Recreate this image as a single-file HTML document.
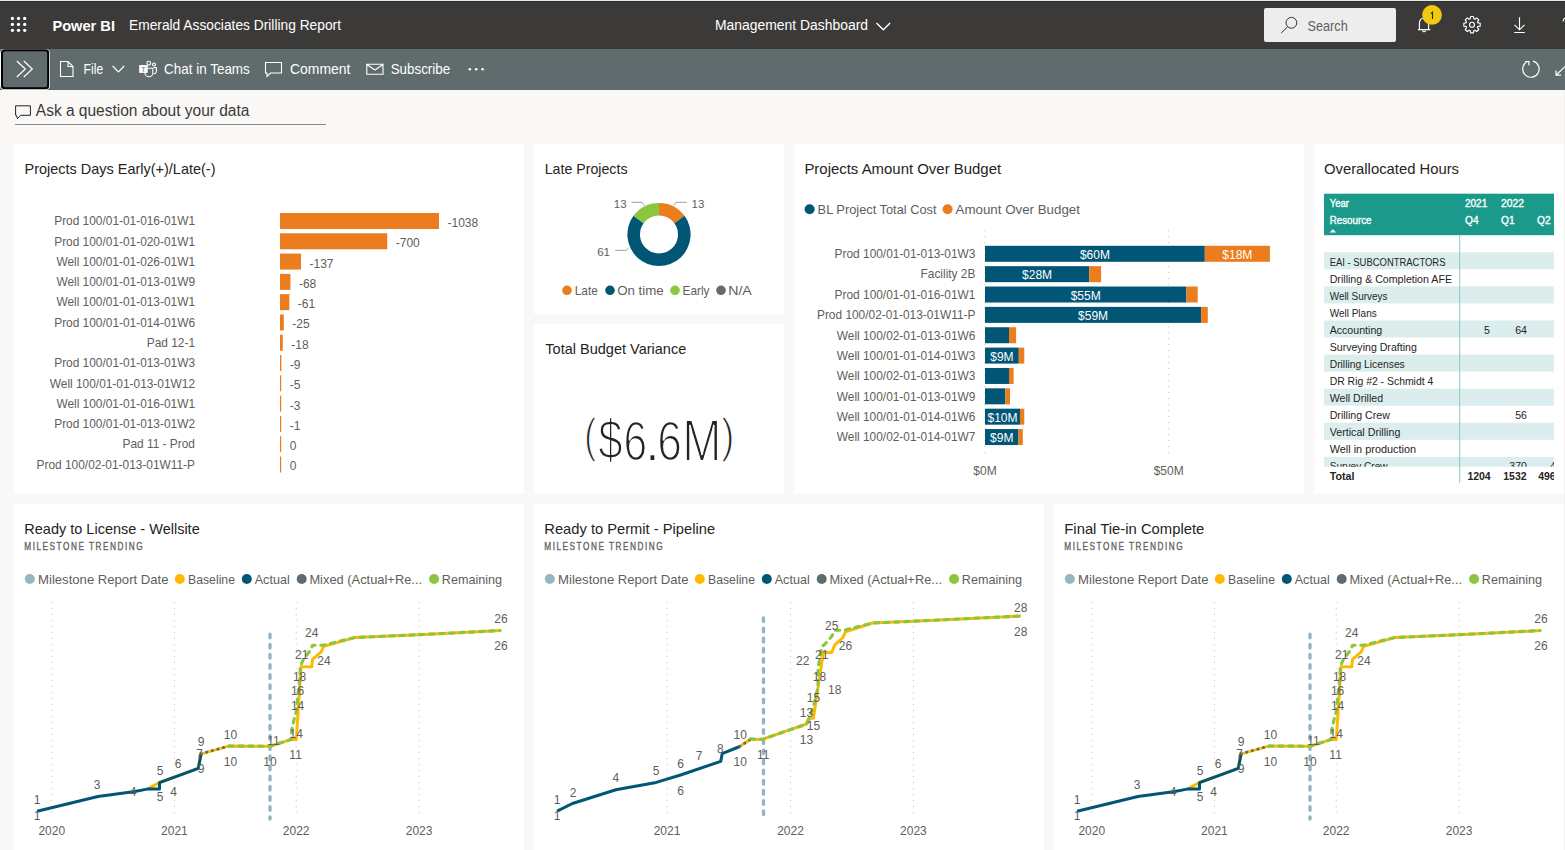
<!DOCTYPE html>
<html><head><meta charset="utf-8"><title>Power BI - Management Dashboard</title>
<style>
html,body{margin:0;padding:0;background:#f9f8f7;}
body{width:1565px;height:850px;overflow:hidden;position:relative;font-family:'Liberation Sans', sans-serif;}
svg text{font-family:'Liberation Sans', sans-serif;}
</style></head>
<body>
<svg width="1565" height="850" viewBox="0 0 1565 850" style="display:block;position:absolute;left:0;top:0">
<rect x="0" y="0" width="1565" height="1" fill="#e4e6e9"/>
<rect x="0" y="1" width="1565" height="48" fill="#3b3a39"/>
<rect x="0" y="1" width="1565" height="1" fill="#302f2e"/>
<circle cx="12.4" cy="18.4" r="1.65" fill="#fff"/>
<circle cx="12.4" cy="24.4" r="1.65" fill="#fff"/>
<circle cx="12.4" cy="30.3" r="1.65" fill="#fff"/>
<circle cx="18.5" cy="18.4" r="1.65" fill="#fff"/>
<circle cx="18.5" cy="24.4" r="1.65" fill="#fff"/>
<circle cx="18.5" cy="30.3" r="1.65" fill="#fff"/>
<circle cx="24.7" cy="18.4" r="1.65" fill="#fff"/>
<circle cx="24.7" cy="24.4" r="1.65" fill="#fff"/>
<circle cx="24.7" cy="30.3" r="1.65" fill="#fff"/>
<text x="52.4" y="30.5" font-size="14.6" fill="#fff" textLength="62.6" lengthAdjust="spacingAndGlyphs" font-weight="bold">Power BI</text>
<text x="129" y="30.1" font-size="14" fill="#fff" textLength="212" lengthAdjust="spacingAndGlyphs">Emerald Associates Drilling Report</text>
<text x="715" y="30.1" font-size="14" fill="#fff" textLength="153" lengthAdjust="spacingAndGlyphs">Management Dashboard</text>
<polyline points="876.5,23 883.3,29.8 890.1,23" fill="none" stroke="#fff" stroke-width="1.4"/>
<rect x="1264" y="8" width="132" height="34" rx="2" fill="#ededed"/>
<circle cx="1291.4" cy="22.8" r="5.4" fill="none" stroke="#323130" stroke-width="1"/>
<line x1="1287.6" y1="26.8" x2="1281.2" y2="33" stroke="#323130" stroke-width="1"/>
<text x="1307.5" y="31.1" font-size="14" fill="#605e5c" textLength="40.2" lengthAdjust="spacingAndGlyphs">Search</text>
<path d="M1417.9,29.6 L1430.3,29.6 M1419.4,29.4 L1419.4,23 A4.6,5 0 0 1 1428.6,23 L1428.6,29.4 M1422.7,30.4 A1.35,1.35 0 0 0 1425.4,30.4" fill="none" stroke="#fff" stroke-width="1.15"/>
<circle cx="1432" cy="14.9" r="9.9" fill="#f2c811"/>
<path d="M1430.9,13.6 L1432.5,12.2 L1432.5,19" fill="none" stroke="#252423" stroke-width="1.1"/>
<polygon points="1470.17,18.78 1470.60,16.52 1473.40,16.52 1473.83,18.78 1474.37,18.97 1474.89,19.22 1476.79,17.92 1478.78,19.91 1477.48,21.81 1477.73,22.33 1477.92,22.87 1480.18,23.30 1480.18,26.10 1477.92,26.53 1477.73,27.07 1477.48,27.59 1478.78,29.49 1476.79,31.48 1474.89,30.18 1474.37,30.43 1473.83,30.62 1473.40,32.88 1470.60,32.88 1470.17,30.62 1469.63,30.43 1469.11,30.18 1467.21,31.48 1465.22,29.49 1466.52,27.59 1466.27,27.07 1466.08,26.53 1463.82,26.10 1463.82,23.30 1466.08,22.87 1466.27,22.33 1466.52,21.81 1465.22,19.91 1467.21,17.92 1469.11,19.22 1469.63,18.97" fill="none" stroke="#fff" stroke-width="1.15" stroke-linejoin="round"/>
<circle cx="1472" cy="24.7" r="2.5" fill="none" stroke="#fff" stroke-width="1.15"/>
<path d="M1519.5,17.2 L1519.5,30 M1514.5,24.8 L1519.5,29.8 L1524.5,24.8 M1514.3,32.5 L1524.8,32.5" fill="none" stroke="#fff" stroke-width="1.15"/>
<path d="M1563.2,21.5 A3.8,3.8 0 0 1 1569,18" fill="none" stroke="#fff" stroke-width="1.2"/>
<rect x="0" y="49" width="1565" height="41" fill="#606b6d"/>
<rect x="0.5" y="49.5" width="49" height="40" rx="3.5" fill="none" stroke="#fff" stroke-width="1"/>
<rect x="2" y="50.2" width="46.2" height="38" rx="3" fill="#606b6d" stroke="#000" stroke-width="2"/>
<polyline points="16.8,61 25.3,69 16.8,77" fill="none" stroke="#fff" stroke-width="1.2"/>
<polyline points="23.8,61 32.3,69 23.8,77" fill="none" stroke="#fff" stroke-width="1.2"/>
<path d="M60.5,61.5 L68,61.5 L73,66.5 L73,76.5 L60.5,76.5 Z M68,61.5 L68,66.5 L73,66.5" fill="none" stroke="#fff" stroke-width="1.1"/>
<text x="83.6" y="74.3" font-size="14.4" fill="#fff" textLength="19.6" lengthAdjust="spacingAndGlyphs">File</text>
<polyline points="112.6,66 118.4,71.8 124.2,66" fill="none" stroke="#fff" stroke-width="1.2"/>
<g fill="none" stroke="#fff" stroke-width="1.1"><circle cx="148.8" cy="63.2" r="1.9"/><circle cx="154" cy="64.5" r="1.5"/><path d="M145,68.2 L152.8,68.2 L152.8,73 A3.9,3.8 0 0 1 145,73 Z"/><path d="M153.6,67.6 L156.4,67.6 L156.4,71.5 A2.3,2.3 0 0 1 153.8,73.6"/></g>
<rect x="139.2" y="65.1" width="8.5" height="7.8" fill="#fff"/>
<text x="143.4" y="71.6" font-size="6.5" fill="#8a9293" text-anchor="middle" font-weight="bold">T</text>
<text x="164.1" y="74.2" font-size="14.4" fill="#fff" textLength="85.7" lengthAdjust="spacingAndGlyphs">Chat in Teams</text>
<path d="M265.5,62.5 L281.5,62.5 L281.5,73 L270.5,73 L267,76.5 L267,73 L265.5,73 Z" fill="none" stroke="#fff" stroke-width="1.1"/>
<text x="290" y="74.2" font-size="14.4" fill="#fff" textLength="60.5" lengthAdjust="spacingAndGlyphs">Comment</text>
<path d="M366.8,64.3 L383,64.3 L383,74.3 L366.8,74.3 Z M366.8,64.5 L374.9,70 L383,64.5" fill="none" stroke="#fff" stroke-width="1.1"/>
<text x="390.7" y="74.2" font-size="14.4" fill="#fff" textLength="59.5" lengthAdjust="spacingAndGlyphs">Subscribe</text>
<circle cx="469.8" cy="69.3" r="1.25" fill="#fff"/>
<circle cx="476.2" cy="69.3" r="1.25" fill="#fff"/>
<circle cx="482.6" cy="69.3" r="1.25" fill="#fff"/>
<path d="M1533.0,61.1 A8.2,8.2 0 1 1 1526.2,62.3" fill="none" stroke="#fff" stroke-width="1.2"/><path d="M1525.2,61.6 L1528.9,61.6 L1528.9,65.2" fill="none" stroke="#fff" stroke-width="1.2"/>
<path d="M1556,75.2 L1566,65.5 M1556,70.4 L1556,75.2 L1561,75.2" fill="none" stroke="#fff" stroke-width="1.2"/>
<path d="M15.6,105.8 L30.4,105.8 L30.4,115.3 L20.8,115.3 L17.4,118.6 L16.4,115.3 L15.6,115.3 Z" fill="none" stroke="#252423" stroke-width="1" stroke-linejoin="miter"/>
<text x="35.8" y="115.9" font-size="16" fill="#3b3a39" textLength="213.6" lengthAdjust="spacingAndGlyphs">Ask a question about your data</text>
<rect x="15" y="124" width="311" height="1" fill="#8a8886"/>
<rect x="14" y="144" width="510" height="350" fill="#fff"/>
<rect x="534" y="144" width="250" height="170" fill="#fff"/>
<rect x="534" y="324" width="250" height="170" fill="#fff"/>
<rect x="794" y="144" width="510" height="350" fill="#fff"/>
<rect x="1314" y="144" width="250" height="350" fill="#fff"/>
<rect x="14" y="504" width="510" height="346" fill="#fff"/>
<rect x="534" y="504" width="510" height="346" fill="#fff"/>
<rect x="1054" y="504" width="510" height="346" fill="#fff"/>
<rect x="1564" y="90" width="1" height="760" fill="#f3f2f1"/>
<text x="24.5" y="174.2" font-size="14.6" fill="#252423" textLength="191" lengthAdjust="spacingAndGlyphs">Projects Days Early(+)/Late(-)</text>
<text x="195" y="225.3" font-size="11.9" fill="#605e5c" text-anchor="end">Prod 100/01-01-016-01W1</text>
<rect x="280" y="213.0" width="159.02" height="16" fill="#ec7d1e"/>
<text x="447.52" y="227.0" font-size="12" fill="#605e5c">-1038</text>
<text x="195" y="245.59" font-size="11.9" fill="#605e5c" text-anchor="end">Prod 100/01-01-020-01W1</text>
<rect x="280" y="233.29" width="107.24" height="16" fill="#ec7d1e"/>
<text x="395.74" y="247.29" font-size="12" fill="#605e5c">-700</text>
<text x="195" y="265.88" font-size="11.9" fill="#605e5c" text-anchor="end">Well 100/01-01-026-01W1</text>
<rect x="280" y="253.58" width="20.99" height="16" fill="#ec7d1e"/>
<text x="309.49" y="267.58" font-size="12" fill="#605e5c">-137</text>
<text x="195" y="286.17" font-size="11.9" fill="#605e5c" text-anchor="end">Well 100/01-01-013-01W9</text>
<rect x="280" y="273.87" width="10.42" height="16" fill="#ec7d1e"/>
<text x="298.92" y="287.87" font-size="12" fill="#605e5c">-68</text>
<text x="195" y="306.46" font-size="11.9" fill="#605e5c" text-anchor="end">Well 100/01-01-013-01W1</text>
<rect x="280" y="294.16" width="9.35" height="16" fill="#ec7d1e"/>
<text x="297.85" y="308.16" font-size="12" fill="#605e5c">-61</text>
<text x="195" y="326.75" font-size="11.9" fill="#605e5c" text-anchor="end">Prod 100/01-01-014-01W6</text>
<rect x="280" y="314.45" width="3.83" height="16" fill="#ec7d1e"/>
<text x="292.33" y="328.45" font-size="12" fill="#605e5c">-25</text>
<text x="195" y="347.04" font-size="11.9" fill="#605e5c" text-anchor="end">Pad 12-1</text>
<rect x="280" y="334.74" width="2.76" height="16" fill="#ec7d1e"/>
<text x="291.26" y="348.74" font-size="12" fill="#605e5c">-18</text>
<text x="195" y="367.33" font-size="11.9" fill="#605e5c" text-anchor="end">Prod 100/01-01-013-01W3</text>
<rect x="280" y="355.03" width="1.38" height="16" fill="#ec7d1e"/>
<text x="289.88" y="369.03" font-size="12" fill="#605e5c">-9</text>
<text x="195" y="387.62" font-size="11.9" fill="#605e5c" text-anchor="end">Well 100/01-01-013-01W12</text>
<rect x="280" y="375.32" width="1.2" height="16" fill="#ec7d1e"/>
<text x="289.7" y="389.32" font-size="12" fill="#605e5c">-5</text>
<text x="195" y="407.91" font-size="11.9" fill="#605e5c" text-anchor="end">Well 100/01-01-016-01W1</text>
<rect x="280" y="395.61" width="1.2" height="16" fill="#ec7d1e"/>
<text x="289.7" y="409.61" font-size="12" fill="#605e5c">-3</text>
<text x="195" y="428.2" font-size="11.9" fill="#605e5c" text-anchor="end">Prod 100/01-01-013-01W2</text>
<rect x="280" y="415.9" width="1.2" height="16" fill="#ec7d1e"/>
<text x="289.7" y="429.9" font-size="12" fill="#605e5c">-1</text>
<text x="195" y="448.49" font-size="11.9" fill="#605e5c" text-anchor="end">Pad 11 - Prod</text>
<rect x="280" y="436.19" width="1.2" height="16" fill="#ec7d1e"/>
<text x="289.7" y="450.19" font-size="12" fill="#605e5c">0</text>
<text x="195" y="468.78" font-size="11.9" fill="#605e5c" text-anchor="end">Prod 100/02-01-013-01W11-P</text>
<rect x="280" y="456.48" width="1.2" height="16" fill="#ec7d1e"/>
<text x="289.7" y="470.48" font-size="12" fill="#605e5c">0</text>
<text x="544.7" y="174.2" font-size="14.6" fill="#252423" textLength="82.8" lengthAdjust="spacingAndGlyphs">Late Projects</text>
<path d="M659.00,202.90 A31.6,31.6 0 0 1 684.50,215.83 L674.33,223.28 A19,19 0 0 0 659.00,215.50 Z" fill="#ec7d1e"/>
<path d="M684.50,215.83 A31.6,31.6 0 1 1 633.50,215.83 L643.67,223.28 A19,19 0 1 0 674.33,223.28 Z" fill="#025675"/>
<path d="M633.50,215.83 A31.6,31.6 0 0 1 659.00,202.90 L659.00,215.50 A19,19 0 0 0 643.67,223.28 Z" fill="#8cc63e"/>
<polyline points="631.5,202.3 642,202.3 644.5,205.5" fill="none" stroke="#a19f9d" stroke-width="1"/>
<polyline points="686.8,202.3 676,202.3 673.5,205.5" fill="none" stroke="#a19f9d" stroke-width="1"/>
<polyline points="615.3,250.4 626,250.4 628.5,248" fill="none" stroke="#a19f9d" stroke-width="1"/>
<text x="626.6" y="208" font-size="11.5" fill="#605e5c" text-anchor="end">13</text>
<text x="691.6" y="208" font-size="11.5" fill="#605e5c">13</text>
<text x="610" y="256" font-size="11.5" fill="#605e5c" text-anchor="end">61</text>
<circle cx="567" cy="290.3" r="4.8" fill="#ec7d1e"/>
<text x="574.8" y="294.8" font-size="12.8" fill="#605e5c" textLength="23" lengthAdjust="spacingAndGlyphs">Late</text>
<circle cx="610" cy="290.3" r="4.8" fill="#025675"/>
<text x="617.2" y="294.8" font-size="12.8" fill="#605e5c" textLength="46.5" lengthAdjust="spacingAndGlyphs">On time</text>
<circle cx="675" cy="290.3" r="4.8" fill="#8cc63e"/>
<text x="682.5" y="294.8" font-size="12.8" fill="#605e5c" textLength="27" lengthAdjust="spacingAndGlyphs">Early</text>
<circle cx="721" cy="290.3" r="4.8" fill="#5f6b6d"/>
<text x="728.2" y="294.8" font-size="12.8" fill="#605e5c" textLength="23.6" lengthAdjust="spacingAndGlyphs">N/A</text>
<text x="545.3" y="353.9" font-size="14.6" fill="#252423" textLength="141" lengthAdjust="spacingAndGlyphs">Total Budget Variance</text>
<g fill="#252423" font-size="55" stroke="#fff" stroke-width="1.7" text-anchor="middle">
<text x="0" y="0" transform="translate(590.2,452.0) scale(0.683,0.866)">(</text>
<text x="0" y="0" transform="translate(610.35,458.5) scale(0.796,1.005)">$</text>
<text x="0" y="0" transform="translate(635.25,459.7) scale(0.771,1.021)">6</text>
<text x="0" y="0" transform="translate(652.5,460.8) scale(1.1,1.1)">.</text>
<text x="0" y="0" transform="translate(669.7,459.7) scale(0.808,1.021)">6</text>
<text x="0" y="0" transform="translate(701.9,460.8) scale(0.857,1.075)">M</text>
<text x="0" y="0" transform="translate(727.8,452.0) scale(0.742,0.866)">)</text>
</g>
<text x="804.4" y="174.2" font-size="14.6" fill="#252423" textLength="196.7" lengthAdjust="spacingAndGlyphs">Projects Amount Over Budget</text>
<circle cx="809.6" cy="209.3" r="5" fill="#025675"/>
<text x="817.6" y="213.8" font-size="12.8" fill="#605e5c" textLength="119" lengthAdjust="spacingAndGlyphs">BL Project Total Cost</text>
<circle cx="947.6" cy="209.3" r="5" fill="#ec7d1e"/>
<text x="955.6" y="213.8" font-size="12.8" fill="#605e5c" textLength="124.3" lengthAdjust="spacingAndGlyphs">Amount Over Budget</text>
<line x1="985" y1="230" x2="985" y2="456" stroke="#c8c6c4" stroke-width="1" stroke-dasharray="1.2,4.8"/>
<line x1="1168.7" y1="230" x2="1168.7" y2="456" stroke="#c8c6c4" stroke-width="1" stroke-dasharray="1.2,4.8"/>
<text x="975.4" y="258.1" font-size="11.9" fill="#605e5c" text-anchor="end">Prod 100/01-01-013-01W3</text>
<rect x="985" y="245.8" width="219.8" height="16" fill="#025675"/>
<rect x="1204.8" y="245.8" width="65.1" height="16" fill="#ec7d1e"/>
<text x="1094.9" y="258.8" font-size="12" fill="#fff" text-anchor="middle">$60M</text>
<text x="1237.35" y="258.8" font-size="12" fill="#fff" text-anchor="middle">$18M</text>
<text x="975.4" y="278.46" font-size="11.9" fill="#605e5c" text-anchor="end">Facility 2B</text>
<rect x="985" y="266.16" width="104.2" height="16" fill="#025675"/>
<rect x="1089.2" y="266.16" width="11.9" height="16" fill="#ec7d1e"/>
<text x="1037.1" y="279.16" font-size="12" fill="#fff" text-anchor="middle">$28M</text>
<text x="975.4" y="298.82" font-size="11.9" fill="#605e5c" text-anchor="end">Prod 100/01-01-016-01W1</text>
<rect x="985" y="286.52" width="201.4" height="16" fill="#025675"/>
<rect x="1186.4" y="286.52" width="11.3" height="16" fill="#ec7d1e"/>
<text x="1085.7" y="299.52" font-size="12" fill="#fff" text-anchor="middle">$55M</text>
<text x="975.4" y="319.18" font-size="11.9" fill="#605e5c" text-anchor="end">Prod 100/02-01-013-01W11-P</text>
<rect x="985" y="306.88" width="216.1" height="16" fill="#025675"/>
<rect x="1201.1" y="306.88" width="6.7" height="16" fill="#ec7d1e"/>
<text x="1093.05" y="319.88" font-size="12" fill="#fff" text-anchor="middle">$59M</text>
<text x="975.4" y="339.54" font-size="11.9" fill="#605e5c" text-anchor="end">Well 100/02-01-013-01W6</text>
<rect x="985" y="327.24" width="24" height="16" fill="#025675"/>
<rect x="1009" y="327.24" width="7.1" height="16" fill="#ec7d1e"/>
<text x="975.4" y="359.9" font-size="11.9" fill="#605e5c" text-anchor="end">Well 100/01-01-014-01W3</text>
<rect x="985" y="347.6" width="33.8" height="16" fill="#025675"/>
<rect x="1018.8" y="347.6" width="5.5" height="16" fill="#ec7d1e"/>
<text x="1001.9" y="360.6" font-size="12" fill="#fff" text-anchor="middle">$9M</text>
<text x="975.4" y="380.26" font-size="11.9" fill="#605e5c" text-anchor="end">Well 100/02-01-013-01W3</text>
<rect x="985" y="367.96" width="24" height="16" fill="#025675"/>
<rect x="1009" y="367.96" width="4.6" height="16" fill="#ec7d1e"/>
<text x="975.4" y="400.62" font-size="11.9" fill="#605e5c" text-anchor="end">Well 100/01-01-013-01W9</text>
<rect x="985" y="388.32" width="20.4" height="16" fill="#025675"/>
<rect x="1005.4" y="388.32" width="4.6" height="16" fill="#ec7d1e"/>
<text x="975.4" y="420.98" font-size="11.9" fill="#605e5c" text-anchor="end">Well 100/01-01-014-01W6</text>
<rect x="985" y="408.68" width="35" height="16" fill="#025675"/>
<rect x="1020" y="408.68" width="4.3" height="16" fill="#ec7d1e"/>
<text x="1002.5" y="421.68" font-size="12" fill="#fff" text-anchor="middle">$10M</text>
<text x="975.4" y="441.34" font-size="11.9" fill="#605e5c" text-anchor="end">Well 100/02-01-014-01W7</text>
<rect x="985" y="429.04" width="33.5" height="16" fill="#025675"/>
<rect x="1018.5" y="429.04" width="4.3" height="16" fill="#ec7d1e"/>
<text x="1001.75" y="442.04" font-size="12" fill="#fff" text-anchor="middle">$9M</text>
<text x="985" y="475" font-size="12" fill="#605e5c" text-anchor="middle">$0M</text>
<text x="1168.7" y="475" font-size="12" fill="#605e5c" text-anchor="middle">$50M</text>
<text x="1324" y="174.2" font-size="14.6" fill="#252423" textLength="135" lengthAdjust="spacingAndGlyphs">Overallocated Hours</text>
<rect x="1324" y="193.7" width="230" height="41.5" fill="#1b9a8b"/>
<text x="1329.7" y="207.0" font-size="10.2" fill="#fff" textLength="19.2" lengthAdjust="spacingAndGlyphs" stroke="#fff" stroke-width="0.35">Year</text>
<text x="1329.7" y="224.0" font-size="10.2" fill="#fff" textLength="41.8" lengthAdjust="spacingAndGlyphs" stroke="#fff" stroke-width="0.35">Resource</text>
<polygon points="1329.6,232.6 1332.9,229.2 1336.2,232.6" fill="#fff"/>
<text x="1465" y="207.0" font-size="10.2" fill="#fff" textLength="22.2" lengthAdjust="spacingAndGlyphs" stroke="#fff" stroke-width="0.35">2021</text>
<text x="1501" y="207.0" font-size="10.2" fill="#fff" textLength="23" lengthAdjust="spacingAndGlyphs" stroke="#fff" stroke-width="0.35">2022</text>
<text x="1465" y="224.0" font-size="10.2" fill="#fff" textLength="13.6" lengthAdjust="spacingAndGlyphs" stroke="#fff" stroke-width="0.35">Q4</text>
<text x="1501" y="224.0" font-size="10.2" fill="#fff" textLength="13.6" lengthAdjust="spacingAndGlyphs" stroke="#fff" stroke-width="0.35">Q1</text>
<text x="1537" y="224.0" font-size="10.2" fill="#fff" textLength="13.6" lengthAdjust="spacingAndGlyphs" stroke="#fff" stroke-width="0.35">Q2</text>
<svg x="1324" y="235.2" width="230" height="231.6" overflow="hidden">
<rect x="0" y="17.05" width="230" height="17.05" fill="#dbeeed"/>
<text x="5.7" y="30.35" font-size="10.6" fill="#252423" textLength="115.8" lengthAdjust="spacingAndGlyphs">EAI - SUBCONTRACTORS</text>
<text x="5.7" y="47.40" font-size="10.6" fill="#252423" textLength="122.3" lengthAdjust="spacingAndGlyphs">Drilling &amp; Completion AFE</text>
<rect x="0" y="51.15" width="230" height="17.05" fill="#dbeeed"/>
<text x="5.7" y="64.45" font-size="10.6" fill="#252423" textLength="57.8" lengthAdjust="spacingAndGlyphs">Well Surveys</text>
<text x="5.7" y="81.50" font-size="10.6" fill="#252423" textLength="47" lengthAdjust="spacingAndGlyphs">Well Plans</text>
<rect x="0" y="85.25" width="230" height="17.05" fill="#dbeeed"/>
<text x="5.7" y="98.55" font-size="10.6" fill="#252423" textLength="52.5" lengthAdjust="spacingAndGlyphs">Accounting</text>
<text x="166" y="98.55" font-size="10.6" fill="#252423" text-anchor="end">5</text>
<text x="203" y="98.55" font-size="10.6" fill="#252423" text-anchor="end">64</text>
<text x="5.7" y="115.60" font-size="10.6" fill="#252423" textLength="87.1" lengthAdjust="spacingAndGlyphs">Surveying Drafting</text>
<rect x="0" y="119.35" width="230" height="17.05" fill="#dbeeed"/>
<text x="5.7" y="132.65" font-size="10.6" fill="#252423" textLength="75.1" lengthAdjust="spacingAndGlyphs">Drilling Licenses</text>
<text x="5.7" y="149.70" font-size="10.6" fill="#252423" textLength="103.6" lengthAdjust="spacingAndGlyphs">DR Rig #2 - Schmidt 4</text>
<rect x="0" y="153.45" width="230" height="17.05" fill="#dbeeed"/>
<text x="5.7" y="166.75" font-size="10.6" fill="#252423" textLength="53.4" lengthAdjust="spacingAndGlyphs">Well Drilled</text>
<text x="5.7" y="183.80" font-size="10.6" fill="#252423" textLength="60.2" lengthAdjust="spacingAndGlyphs">Drilling Crew</text>
<text x="203" y="183.80" font-size="10.6" fill="#252423" text-anchor="end">56</text>
<rect x="0" y="187.55" width="230" height="17.05" fill="#dbeeed"/>
<text x="5.7" y="200.85" font-size="10.6" fill="#252423" textLength="70.7" lengthAdjust="spacingAndGlyphs">Vertical Drilling</text>
<text x="5.7" y="217.90" font-size="10.6" fill="#252423" textLength="86.4" lengthAdjust="spacingAndGlyphs">Well in production</text>
<rect x="0" y="221.65" width="230" height="17.05" fill="#dbeeed"/>
<text x="5.7" y="234.95" font-size="10.6" fill="#252423" textLength="58" lengthAdjust="spacingAndGlyphs">Survey Crew</text>
<text x="203" y="234.95" font-size="10.6" fill="#252423" text-anchor="end">370</text>
<text x="232" y="234.95" font-size="10.6" fill="#252423" text-anchor="end">4</text>
</svg>
<rect x="1459.2" y="235.2" width="1" height="248" fill="#8cc8c0"/>
<text x="1329.7" y="479.8" font-size="10.4" fill="#252423" textLength="24.7" lengthAdjust="spacingAndGlyphs" font-weight="bold">Total</text>
<text x="1467.4" y="479.8" font-size="10.4" fill="#252423" textLength="23.3" lengthAdjust="spacingAndGlyphs" font-weight="bold">1204</text>
<text x="1503.3" y="479.8" font-size="10.4" fill="#252423" textLength="23.3" lengthAdjust="spacingAndGlyphs" font-weight="bold">1532</text>
<svg x="1324" y="460" width="230" height="30" overflow="hidden">
<text x="214.2" y="19.8" font-size="10.4" fill="#252423" font-weight="bold" textLength="23.3" lengthAdjust="spacingAndGlyphs">4964</text>
</svg>
<text x="24.3" y="534" font-size="14.6" fill="#252423" textLength="175.4" lengthAdjust="spacingAndGlyphs">Ready to License - Wellsite</text>
<text x="0" y="0" transform="translate(24.3,550) scale(0.8,1)" font-size="10.3" fill="#66645f" stroke="#66645f" stroke-width="0.35" textLength="148" lengthAdjust="spacing">MILESTONE TRENDING</text>
<circle cx="29.80" cy="579" r="5" fill="#95b5c4"/>
<text x="38.1" y="583.6" font-size="12.8" fill="#605e5c" textLength="130.4" lengthAdjust="spacingAndGlyphs">Milestone Report Date</text>
<circle cx="179.80" cy="579" r="5" fill="#ffb900"/>
<text x="188" y="583.6" font-size="12.8" fill="#605e5c" textLength="47" lengthAdjust="spacingAndGlyphs">Baseline</text>
<circle cx="246.80" cy="579" r="5" fill="#025675"/>
<text x="254.7" y="583.6" font-size="12.8" fill="#605e5c" textLength="35" lengthAdjust="spacingAndGlyphs">Actual</text>
<circle cx="301.70" cy="579" r="5" fill="#5f6b6d"/>
<text x="309.4" y="583.6" font-size="12.8" fill="#605e5c" textLength="112.7" lengthAdjust="spacingAndGlyphs">Mixed (Actual+Re...</text>
<circle cx="434.10" cy="579" r="5" fill="#8cc63e"/>
<text x="441.8" y="583.6" font-size="12.8" fill="#605e5c" textLength="60.3" lengthAdjust="spacingAndGlyphs">Remaining</text>
<text x="544.3" y="534" font-size="14.6" fill="#252423" textLength="170.8" lengthAdjust="spacingAndGlyphs">Ready to Permit - Pipeline</text>
<text x="0" y="0" transform="translate(544.3,550) scale(0.8,1)" font-size="10.3" fill="#66645f" stroke="#66645f" stroke-width="0.35" textLength="148" lengthAdjust="spacing">MILESTONE TRENDING</text>
<circle cx="549.80" cy="579" r="5" fill="#95b5c4"/>
<text x="558.1" y="583.6" font-size="12.8" fill="#605e5c" textLength="130.4" lengthAdjust="spacingAndGlyphs">Milestone Report Date</text>
<circle cx="699.80" cy="579" r="5" fill="#ffb900"/>
<text x="708" y="583.6" font-size="12.8" fill="#605e5c" textLength="47" lengthAdjust="spacingAndGlyphs">Baseline</text>
<circle cx="766.80" cy="579" r="5" fill="#025675"/>
<text x="774.7" y="583.6" font-size="12.8" fill="#605e5c" textLength="35" lengthAdjust="spacingAndGlyphs">Actual</text>
<circle cx="821.70" cy="579" r="5" fill="#5f6b6d"/>
<text x="829.4" y="583.6" font-size="12.8" fill="#605e5c" textLength="112.7" lengthAdjust="spacingAndGlyphs">Mixed (Actual+Re...</text>
<circle cx="954.10" cy="579" r="5" fill="#8cc63e"/>
<text x="961.8" y="583.6" font-size="12.8" fill="#605e5c" textLength="60.3" lengthAdjust="spacingAndGlyphs">Remaining</text>
<text x="1064.3" y="534" font-size="14.6" fill="#252423" textLength="140" lengthAdjust="spacingAndGlyphs">Final Tie-in Complete</text>
<text x="0" y="0" transform="translate(1064.3,550) scale(0.8,1)" font-size="10.3" fill="#66645f" stroke="#66645f" stroke-width="0.35" textLength="148" lengthAdjust="spacing">MILESTONE TRENDING</text>
<circle cx="1069.80" cy="579" r="5" fill="#95b5c4"/>
<text x="1078.1" y="583.6" font-size="12.8" fill="#605e5c" textLength="130.4" lengthAdjust="spacingAndGlyphs">Milestone Report Date</text>
<circle cx="1219.80" cy="579" r="5" fill="#ffb900"/>
<text x="1228" y="583.6" font-size="12.8" fill="#605e5c" textLength="47" lengthAdjust="spacingAndGlyphs">Baseline</text>
<circle cx="1286.80" cy="579" r="5" fill="#025675"/>
<text x="1294.7" y="583.6" font-size="12.8" fill="#605e5c" textLength="35" lengthAdjust="spacingAndGlyphs">Actual</text>
<circle cx="1341.70" cy="579" r="5" fill="#5f6b6d"/>
<text x="1349.4" y="583.6" font-size="12.8" fill="#605e5c" textLength="112.7" lengthAdjust="spacingAndGlyphs">Mixed (Actual+Re...</text>
<circle cx="1474.10" cy="579" r="5" fill="#8cc63e"/>
<text x="1481.8" y="583.6" font-size="12.8" fill="#605e5c" textLength="60.3" lengthAdjust="spacingAndGlyphs">Remaining</text>
<line x1="51.8" y1="602" x2="51.8" y2="818" stroke="#c8c6c4" stroke-width="1" stroke-dasharray="1.2,4.8"/>
<line x1="174.4" y1="602" x2="174.4" y2="818" stroke="#c8c6c4" stroke-width="1" stroke-dasharray="1.2,4.8"/>
<line x1="296.2" y1="602" x2="296.2" y2="818" stroke="#c8c6c4" stroke-width="1" stroke-dasharray="1.2,4.8"/>
<line x1="419.1" y1="602" x2="419.1" y2="818" stroke="#c8c6c4" stroke-width="1" stroke-dasharray="1.2,4.8"/>
<text x="51.8" y="835.2" font-size="12" fill="#605e5c" text-anchor="middle">2020</text>
<text x="174.4" y="835.2" font-size="12" fill="#605e5c" text-anchor="middle">2021</text>
<text x="296.2" y="835.2" font-size="12" fill="#605e5c" text-anchor="middle">2022</text>
<text x="419.1" y="835.2" font-size="12" fill="#605e5c" text-anchor="middle">2023</text>
<line x1="270" y1="634.2" x2="270" y2="819" stroke="#95b5c4" stroke-width="3.4" stroke-linecap="round" stroke-dasharray="3.6,6.55"/>
<polyline points="147.2,789.1 159.5,782.5 198.3,768.3 201.1,753.9 228.7,746.1 270.0,746.2 290.8,739.6 296.3,739.6 301.0,666.8 311.8,666.8 312.5,659.4 321.3,651.9 323.3,646.5 354.4,637.6 419.1,634.7 500.0,630.6" fill="none" stroke="#ffb900" stroke-width="3" stroke-linejoin="round"/>
<polyline points="37.1,811.2 97.9,796.5 133.2,791.8 147.2,789.1 159.5,789.1 159.5,782.7 198.3,768.3 201.1,753.9" fill="none" stroke="#025675" stroke-width="3" stroke-linejoin="round"/>
<polyline points="201.1,753.7 228.7,746.1" fill="none" stroke="#5f6b6d" stroke-width="3" stroke-linecap="round" stroke-dasharray="0.01,5.8"/>
<polyline points="228.7,746.1 270.0,746.2 290.8,739.6 292.2,727.1 296.3,710.9 297.6,698.7 299.6,679.7 300.3,666.8 303.0,660.0 311.2,649.2 312.5,645.2 323.3,645.2 354.4,637.6 419.1,634.7 500.0,630.6" fill="none" stroke="#8cc63e" stroke-width="3.1" stroke-dasharray="4.4,5.6" stroke-linecap="round" stroke-linejoin="round"/>
<text x="37" y="804.3" font-size="12" fill="#605e5c" text-anchor="middle">1</text>
<text x="37" y="820.3" font-size="12" fill="#605e5c" text-anchor="middle">1</text>
<text x="97" y="789.0" font-size="12" fill="#605e5c" text-anchor="middle">3</text>
<text x="133.2" y="795.7" font-size="12" fill="#605e5c" text-anchor="middle">4</text>
<text x="160" y="774.7" font-size="12" fill="#605e5c" text-anchor="middle">5</text>
<text x="160" y="801.0" font-size="12" fill="#605e5c" text-anchor="middle">5</text>
<text x="173.5" y="796.1" font-size="12" fill="#605e5c" text-anchor="middle">4</text>
<text x="178.1" y="767.7" font-size="12" fill="#605e5c" text-anchor="middle">6</text>
<text x="201.1" y="745.8" font-size="12" fill="#605e5c" text-anchor="middle">9</text>
<text x="199.5" y="758.2" font-size="12" fill="#605e5c" text-anchor="middle">7</text>
<text x="201.1" y="773.0" font-size="12" fill="#605e5c" text-anchor="middle">9</text>
<text x="230.4" y="738.8" font-size="12" fill="#605e5c" text-anchor="middle">10</text>
<text x="230.4" y="766.0" font-size="12" fill="#605e5c" text-anchor="middle">10</text>
<text x="273.5" y="744.9" font-size="12" fill="#605e5c" text-anchor="middle">11</text>
<text x="270" y="766.1" font-size="12" fill="#605e5c" text-anchor="middle">10</text>
<text x="311.8" y="636.7" font-size="12" fill="#605e5c" text-anchor="middle">24</text>
<text x="301.7" y="658.9" font-size="12" fill="#605e5c" text-anchor="middle">21</text>
<text x="324" y="665.0" font-size="12" fill="#605e5c" text-anchor="middle">24</text>
<text x="299.6" y="680.6" font-size="12" fill="#605e5c" text-anchor="middle">18</text>
<text x="297.6" y="694.8" font-size="12" fill="#605e5c" text-anchor="middle">16</text>
<text x="297.6" y="709.7" font-size="12" fill="#605e5c" text-anchor="middle">14</text>
<text x="296.3" y="737.5" font-size="12" fill="#605e5c" text-anchor="middle">14</text>
<text x="295.6" y="758.7" font-size="12" fill="#605e5c" text-anchor="middle">11</text>
<text x="500.9" y="622.8" font-size="12" fill="#605e5c" text-anchor="middle">26</text>
<text x="500.9" y="649.9" font-size="12" fill="#605e5c" text-anchor="middle">26</text>
<line x1="667" y1="602" x2="667" y2="818" stroke="#c8c6c4" stroke-width="1" stroke-dasharray="1.2,4.8"/>
<line x1="790.5" y1="602" x2="790.5" y2="818" stroke="#c8c6c4" stroke-width="1" stroke-dasharray="1.2,4.8"/>
<line x1="913.4" y1="602" x2="913.4" y2="818" stroke="#c8c6c4" stroke-width="1" stroke-dasharray="1.2,4.8"/>
<text x="667" y="835.2" font-size="12" fill="#605e5c" text-anchor="middle">2021</text>
<text x="790.5" y="835.2" font-size="12" fill="#605e5c" text-anchor="middle">2022</text>
<text x="913.4" y="835.2" font-size="12" fill="#605e5c" text-anchor="middle">2023</text>
<line x1="763.5" y1="618" x2="763.5" y2="819" stroke="#95b5c4" stroke-width="3.4" stroke-linecap="round" stroke-dasharray="3.6,6.55"/>
<polyline points="739.8,746.5 750.2,739.6 762.9,739.2 806.5,724.0 809.5,718.3 813.4,718.3 823.3,652.5 831.7,652.5 834.8,644.8 842.5,638.0 845.5,631.8 872.4,623.0 913.4,621.2 1020.8,616.0" fill="none" stroke="#ffb900" stroke-width="3" stroke-linejoin="round"/>
<polyline points="557.1,811.2 572.4,803.5 615.9,789.7 656.2,782.4 680.6,775.0 720.7,761.4 722.2,753.7 739.8,746.5" fill="none" stroke="#025675" stroke-width="3" stroke-linejoin="round"/>
<polyline points="739.8,746.3 750.2,739.6" fill="none" stroke="#5f6b6d" stroke-width="3" stroke-linecap="round" stroke-dasharray="0.01,5.8"/>
<polyline points="750.2,738.8 762.9,739.2 806.5,724.0 813.4,706.8 818.0,687.0 818.0,668.6 821.8,647.1 825.6,643.3 831.7,636.4 834.8,630.3 844.0,630.3 872.4,623.0 913.4,621.2 1020.8,616.0" fill="none" stroke="#8cc63e" stroke-width="3.1" stroke-dasharray="4.4,5.6" stroke-linecap="round" stroke-linejoin="round"/>
<text x="557" y="804.3" font-size="12" fill="#605e5c" text-anchor="middle">1</text>
<text x="557" y="820.3" font-size="12" fill="#605e5c" text-anchor="middle">1</text>
<text x="573" y="796.9" font-size="12" fill="#605e5c" text-anchor="middle">2</text>
<text x="615.9" y="782.3" font-size="12" fill="#605e5c" text-anchor="middle">4</text>
<text x="656.2" y="774.9" font-size="12" fill="#605e5c" text-anchor="middle">5</text>
<text x="680.6" y="768.1" font-size="12" fill="#605e5c" text-anchor="middle">6</text>
<text x="680.6" y="794.9" font-size="12" fill="#605e5c" text-anchor="middle">6</text>
<text x="699.2" y="759.6" font-size="12" fill="#605e5c" text-anchor="middle">7</text>
<text x="720.3" y="752.7" font-size="12" fill="#605e5c" text-anchor="middle">8</text>
<text x="740.2" y="738.9" font-size="12" fill="#605e5c" text-anchor="middle">10</text>
<text x="740.2" y="765.7" font-size="12" fill="#605e5c" text-anchor="middle">10</text>
<text x="763.2" y="758.8" font-size="12" fill="#605e5c" text-anchor="middle">11</text>
<text x="831.7" y="630.0" font-size="12" fill="#605e5c" text-anchor="middle">25</text>
<text x="845.5" y="649.9" font-size="12" fill="#605e5c" text-anchor="middle">26</text>
<text x="802.7" y="665.2" font-size="12" fill="#605e5c" text-anchor="middle">22</text>
<text x="821.8" y="658.8" font-size="12" fill="#605e5c" text-anchor="middle">21</text>
<text x="819.5" y="680.5" font-size="12" fill="#605e5c" text-anchor="middle">18</text>
<text x="834.8" y="694.3" font-size="12" fill="#605e5c" text-anchor="middle">18</text>
<text x="813.4" y="702.0" font-size="12" fill="#605e5c" text-anchor="middle">15</text>
<text x="806.5" y="717.3" font-size="12" fill="#605e5c" text-anchor="middle">13</text>
<text x="813.4" y="730.3" font-size="12" fill="#605e5c" text-anchor="middle">15</text>
<text x="806.5" y="744.1" font-size="12" fill="#605e5c" text-anchor="middle">13</text>
<text x="1020.8" y="611.7" font-size="12" fill="#605e5c" text-anchor="middle">28</text>
<text x="1020.8" y="635.6" font-size="12" fill="#605e5c" text-anchor="middle">28</text>
<line x1="1091.8" y1="602" x2="1091.8" y2="818" stroke="#c8c6c4" stroke-width="1" stroke-dasharray="1.2,4.8"/>
<line x1="1214.4" y1="602" x2="1214.4" y2="818" stroke="#c8c6c4" stroke-width="1" stroke-dasharray="1.2,4.8"/>
<line x1="1336.2" y1="602" x2="1336.2" y2="818" stroke="#c8c6c4" stroke-width="1" stroke-dasharray="1.2,4.8"/>
<line x1="1459.1" y1="602" x2="1459.1" y2="818" stroke="#c8c6c4" stroke-width="1" stroke-dasharray="1.2,4.8"/>
<text x="1091.8" y="835.2" font-size="12" fill="#605e5c" text-anchor="middle">2020</text>
<text x="1214.4" y="835.2" font-size="12" fill="#605e5c" text-anchor="middle">2021</text>
<text x="1336.2" y="835.2" font-size="12" fill="#605e5c" text-anchor="middle">2022</text>
<text x="1459.1" y="835.2" font-size="12" fill="#605e5c" text-anchor="middle">2023</text>
<line x1="1310" y1="634.2" x2="1310" y2="819" stroke="#95b5c4" stroke-width="3.4" stroke-linecap="round" stroke-dasharray="3.6,6.55"/>
<polyline points="1187.2,789.1 1199.5,782.5 1238.3,768.3 1241.1,753.9 1268.7,746.1 1310.0,746.2 1330.8,739.6 1336.3,739.6 1341.0,666.8 1351.8,666.8 1352.5,659.4 1361.3,651.9 1363.3,646.5 1394.4,637.6 1459.1,634.7 1540.0,630.6" fill="none" stroke="#ffb900" stroke-width="3" stroke-linejoin="round"/>
<polyline points="1077.1,811.2 1137.9,796.5 1173.2,791.8 1187.2,789.1 1199.5,789.1 1199.5,782.7 1238.3,768.3 1241.1,753.9" fill="none" stroke="#025675" stroke-width="3" stroke-linejoin="round"/>
<polyline points="1241.1,753.7 1268.7,746.1" fill="none" stroke="#5f6b6d" stroke-width="3" stroke-linecap="round" stroke-dasharray="0.01,5.8"/>
<polyline points="1268.7,746.1 1310.0,746.2 1330.8,739.6 1332.2,727.1 1336.3,710.9 1337.6,698.7 1339.6,679.7 1340.3,666.8 1343.0,660.0 1351.2,649.2 1352.5,645.2 1363.3,645.2 1394.4,637.6 1459.1,634.7 1540.0,630.6" fill="none" stroke="#8cc63e" stroke-width="3.1" stroke-dasharray="4.4,5.6" stroke-linecap="round" stroke-linejoin="round"/>
<text x="1077" y="804.3" font-size="12" fill="#605e5c" text-anchor="middle">1</text>
<text x="1077" y="820.3" font-size="12" fill="#605e5c" text-anchor="middle">1</text>
<text x="1137" y="789.0" font-size="12" fill="#605e5c" text-anchor="middle">3</text>
<text x="1173.2" y="795.7" font-size="12" fill="#605e5c" text-anchor="middle">4</text>
<text x="1200" y="774.7" font-size="12" fill="#605e5c" text-anchor="middle">5</text>
<text x="1200" y="801.0" font-size="12" fill="#605e5c" text-anchor="middle">5</text>
<text x="1213.5" y="796.1" font-size="12" fill="#605e5c" text-anchor="middle">4</text>
<text x="1218.1" y="767.7" font-size="12" fill="#605e5c" text-anchor="middle">6</text>
<text x="1241.1" y="745.8" font-size="12" fill="#605e5c" text-anchor="middle">9</text>
<text x="1239.5" y="758.2" font-size="12" fill="#605e5c" text-anchor="middle">7</text>
<text x="1241.1" y="773.0" font-size="12" fill="#605e5c" text-anchor="middle">9</text>
<text x="1270.4" y="738.8" font-size="12" fill="#605e5c" text-anchor="middle">10</text>
<text x="1270.4" y="766.0" font-size="12" fill="#605e5c" text-anchor="middle">10</text>
<text x="1313.5" y="744.9" font-size="12" fill="#605e5c" text-anchor="middle">11</text>
<text x="1310" y="766.1" font-size="12" fill="#605e5c" text-anchor="middle">10</text>
<text x="1351.8" y="636.7" font-size="12" fill="#605e5c" text-anchor="middle">24</text>
<text x="1341.7" y="658.9" font-size="12" fill="#605e5c" text-anchor="middle">21</text>
<text x="1364" y="665.0" font-size="12" fill="#605e5c" text-anchor="middle">24</text>
<text x="1339.6" y="680.6" font-size="12" fill="#605e5c" text-anchor="middle">18</text>
<text x="1337.6" y="694.8" font-size="12" fill="#605e5c" text-anchor="middle">16</text>
<text x="1337.6" y="709.7" font-size="12" fill="#605e5c" text-anchor="middle">14</text>
<text x="1336.3" y="737.5" font-size="12" fill="#605e5c" text-anchor="middle">14</text>
<text x="1335.6" y="758.7" font-size="12" fill="#605e5c" text-anchor="middle">11</text>
<text x="1540.9" y="622.8" font-size="12" fill="#605e5c" text-anchor="middle">26</text>
<text x="1540.9" y="649.9" font-size="12" fill="#605e5c" text-anchor="middle">26</text>
</svg>
</body></html>
